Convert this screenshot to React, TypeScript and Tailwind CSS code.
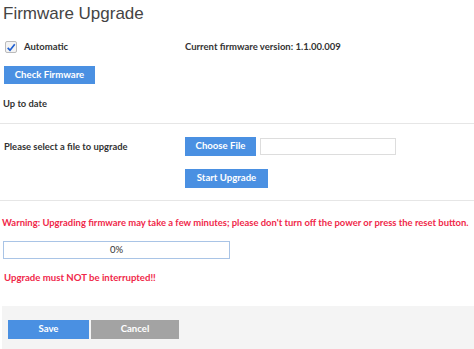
import React from 'react';

const font = { fontFamily: 'Lato, "Open Sans", sans-serif' };

export default function App() {
  return (
    <div className="w-[474px] h-[349px] bg-white text-[#333] overflow-hidden" style={font}>
      <div className="px-[3px] pt-[4px]">
        <h1 className="text-[17px] leading-[20px] text-[#444]" style={{ fontFamily: '"Liberation Sans", Arial, sans-serif' }}>
          Firmware Upgrade
        </h1>

        <div className="flex items-center mt-[16px] h-[14px]">
          <div className="w-[182px] flex items-center">
            <span className="w-[12px] h-[12px] ml-[2px] rounded-[2px] border border-[#bbb] bg-[#f3f3f3] flex items-center justify-center">
              <svg viewBox="0 0 12 12" className="w-[11px] h-[11px]">
                <path d="M2 6.5 L4.8 9.2 L10.5 2" fill="none" stroke="#1f5fd1" strokeWidth="2" />
              </svg>
            </span>
            <span className="ml-[7px] text-[9.5px] font-bold">Automatic</span>
          </div>
          <span className="text-[9.5px] font-bold">Current firmware version: 1.1.00.009</span>
        </div>

        <button className="mt-[12px] ml-[1px] w-[91px] h-[18px] bg-[#4a90e2] text-white text-[9.6px] font-bold">
          Check Firmware
        </button>

        <div className="mt-[13px] text-[9.4px] font-bold leading-[14px]">Up to date</div>
      </div>

      <div className="mt-[12px] border-t border-[#e6e6e6]" />

      <div className="px-[4px] pt-[13px] flex">
        <div className="w-[181px] pt-[3px] text-[9.4px] font-bold leading-[14px]">Please select a file to upgrade</div>
        <div className="flex flex-col items-start">
          <div className="flex items-center">
            <button className="w-[71px] h-[19px] bg-[#4a90e2] text-white text-[9.6px] font-bold">Choose File</button>
            <div className="ml-[4px] w-[136px] h-[17px] border border-[#ddd] bg-white" />
          </div>
          <button className="mt-[13px] w-[83px] h-[19px] bg-[#4a90e2] text-white text-[9.6px] font-bold">Start Upgrade</button>
        </div>
      </div>

      <div className="mt-[12px] border-t border-[#e6e6e6]" />

      <div className="px-[2px] pt-[15px] text-[9.45px] font-bold text-[#f0284a] leading-[14px] whitespace-nowrap">
        Warning: Upgrading firmware may take a few minutes; please don't turn off the power or press the reset button.
      </div>

      <div className="ml-[3px] mt-[11px] w-[227px] h-[18px] border border-[#a9c4e6] flex items-center justify-center text-[9.5px] text-[#333]">
        0%
      </div>

      <div className="px-[4px] mt-[12px] text-[9.6px] font-bold text-[#f0284a] leading-[14px]">Upgrade must NOT be interrupted!!</div>

      <div className="mt-[21px] ml-[2px] h-[45px] bg-[#f4f4f4] flex items-start gap-[2px] pl-[6px] pt-[14px]">
        <button className="w-[81px] h-[19px] bg-[#4a90e2] text-white text-[9.6px] font-bold">Save</button>
        <button className="w-[88px] h-[19px] bg-[#a3a3a3] text-white text-[9.6px] font-bold">Cancel</button>
      </div>
    </div>
  );
}
